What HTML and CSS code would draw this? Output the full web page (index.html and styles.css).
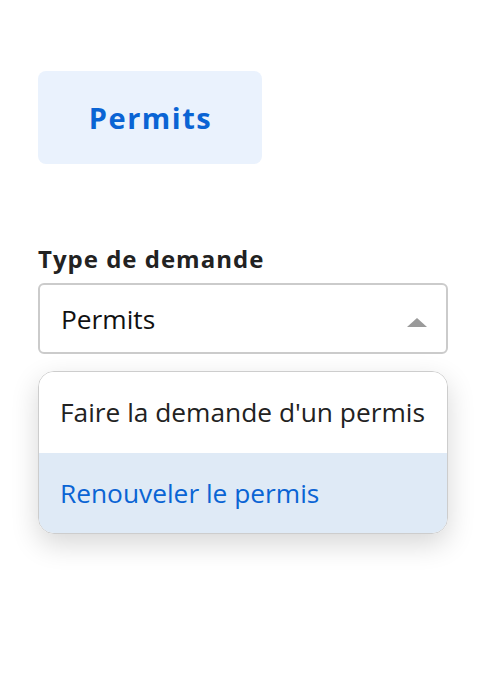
FILE: index.html
```html
<!DOCTYPE html>
<html lang="fr">
<head>
<meta charset="utf-8">
<title>Permits</title>
<link rel="stylesheet" href="styles.css">
</head>
<body>
<main class="page">
  <button class="tab" type="button">Permits</button>
  <div class="field">
    <label class="label">Type de demande</label>
    <div class="select">
      <span class="select-value">Permits</span>
      <span class="caret"></span>
    </div>
    <ul class="menu">
      <li class="option">Faire la demande d'un permis</li>
      <li class="option active">Renouveler le permis</li>
    </ul>
  </div>
</main>
</body>
</html>
```

FILE: styles.css
```css
* { box-sizing: border-box; }
html, body { margin: 0; padding: 0; background: #fff; }
body {
  min-height: 100vh;
  font-family: "Open Sans", "Noto Sans", sans-serif;
  color: #222;
}
.page {
  min-height: 100vh;
  padding: 71px 45px 0 38px;
  display: flex;
  flex-direction: column;
  align-items: flex-start;
}
.tab {
  width: 224px;
  height: 93px;
  border: none;
  border-radius: 8px;
  background: #eaf2fd;
  color: #0a64d4;
  font-family: inherit;
  font-size: 29px;
  font-weight: 700;
  letter-spacing: 1.5px;
  padding: 0 0 0 1px;
}
.field {
  margin-top: 81px;
  width: 410px;
  display: flex;
  flex-direction: column;
}
.label {
  font-size: 24px;
  font-weight: 700;
  line-height: 28px;
  letter-spacing: 1px;
  color: #222;
}
.select {
  margin-top: 10px;
  height: 71px;
  border: 2px solid #cbcbcb;
  border-radius: 6px;
  display: flex;
  align-items: center;
  justify-content: space-between;
  padding: 0 19px 0 21px;
  font-size: 26.3px;
  color: #111;
}
.caret {
  width: 0;
  height: 0;
  border-left: 10.5px solid transparent;
  border-right: 10.5px solid transparent;
  border-bottom: 9px solid #9a9a9a;
  margin-top: 8px;
}
.menu {
  list-style: none;
  margin: 17px 0 0 0;
  padding: 0;
  border: 1.5px solid #cdcdcd;
  border-radius: 16px;
  overflow: hidden;
  box-shadow: 0 10px 28px rgba(0, 0, 0, 0.16);
}
.option {
  height: 80.5px;
  display: flex;
  align-items: center;
  padding: 0 19px 0 21px;
  font-size: 26.3px;
  color: #222;
  background: #fff;
}
.option.active {
  background: #dfeaf6;
  color: #0a64d4;
}
```
